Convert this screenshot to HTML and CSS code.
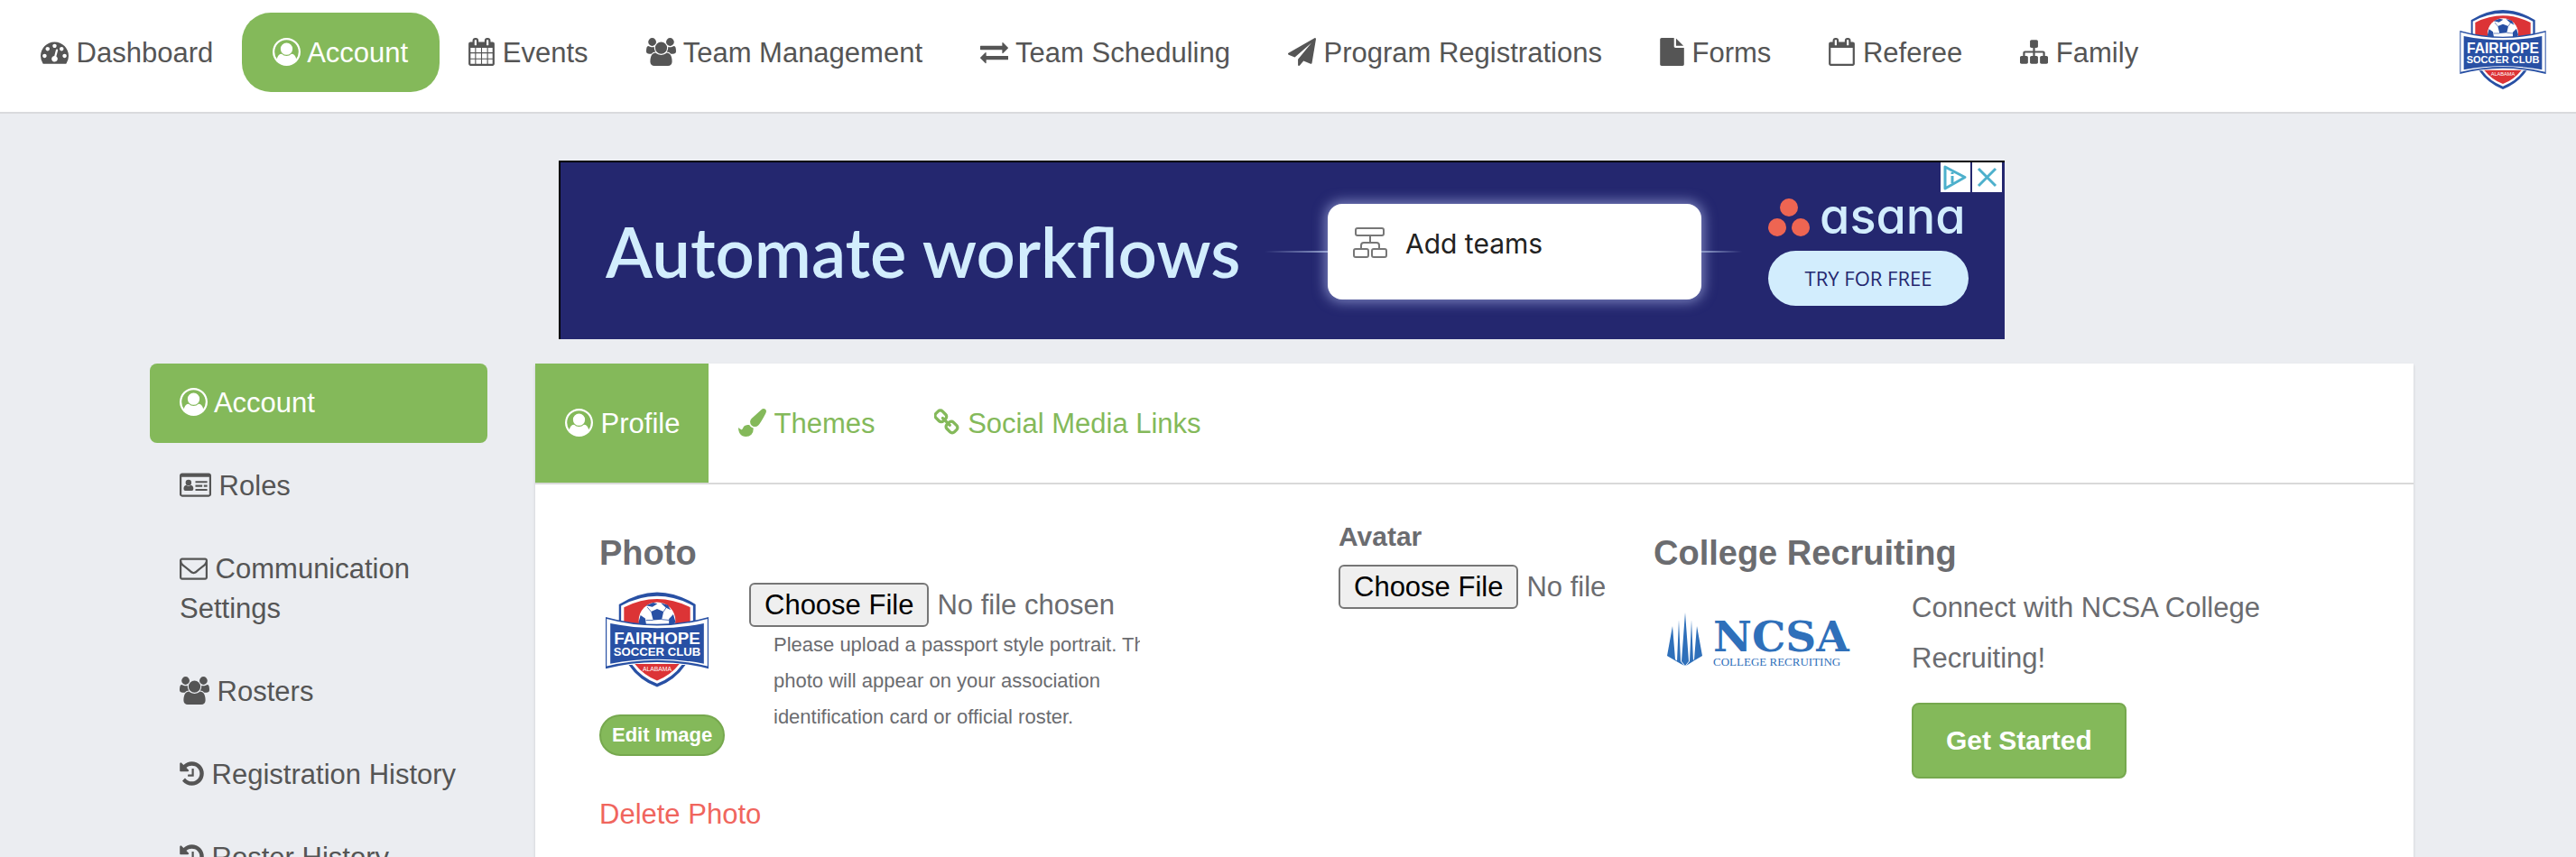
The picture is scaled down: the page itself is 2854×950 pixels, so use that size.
FILE: index.html
```
<!DOCTYPE html>
<html lang="en">
<head>
    <meta charset="UTF-8">
    <meta name="viewport" content="width=device-width, initial-scale=1.0">
    <title>Account</title>
    <link rel="stylesheet" href="styles.css">
</head>
<body>
    <!-- shared icons -->
    <svg class="sprite" aria-hidden="true">
        <symbol id="user" viewBox="0 0 1792 1792"><path d="M896 0q182 0 348 71t286 191 191 286 71 348q0 181-70.5 347t-190.5 286-286 191.5-349 71.5-349-71-285.5-191.5-190.5-286-71-347.5 71-348 191-286 286-191 348-71zm619 1351q149-205 149-455 0-156-61-298t-164-245-245-164-298-61-298 61-245 164-164 245-61 298q0 250 149 455 66-327 306-327 131 128 313 128t313-128q240 0 306 327zm-235-647q0-159-112.5-271.5t-271.5-112.5-271.5 112.5-112.5 271.5 112.5 271.5 271.5 112.5 271.5-112.5 112.5-271.5z"/></symbol>
        <symbol id="group" viewBox="-64 0 1920 1792"><path d="M529 896q-162 5-265 128h-134q-82 0-138-40.5t-56-118.5q0-353 124-353 6 0 43.5 21t97.5 42.5 119 21.5q67 0 133-23-5 37-5 66 0 139 81 256zm1071 637q0 120-73 189.5t-194 69.5h-874q-121 0-194-69.5t-73-189.5q0-53 3.5-103.5t14-109 26.5-108.5 43-97.5 62-81 85.5-53.5 111.5-20q10 0 43 21.5t73 48 107 48 135 21.5 135-21.5 107-48 73-48 43-21.5q61 0 111.5 20t85.5 53.5 62 81 43 97.5 26.5 108.5 14 109 3.5 103.5zm-1024-1277q0 106-75 181t-181 75-181-75-75-181 75-181 181-75 181 75 75 181zm704 384q0 159-112.5 271.5t-271.5 112.5-271.5-112.5-112.5-271.5 112.5-271.5 271.5-112.5 271.5 112.5 112.5 271.5zm576 225q0 78-56 118.5t-138 40.5h-134q-103-123-265-128 81-117 81-256 0-29-5-66 66 23 133 23 59 0 119-21.5t97.5-42.5 43.5-21q124 0 124 353zm-128-609q0 106-75 181t-181 75-181-75-75-181 75-181 181-75 181 75 75 181z"/></symbol>
        <symbol id="history" viewBox="128 0 1536 1792"><path d="M1664 896q0 156-61 298t-164 245-245 164-298 61q-172 0-327-72.5t-264-204.5q-7-10-6.5-22.5t8.5-20.5l137-138q10-9 25-9 16 2 23 12 73 95 179 147t225 52q104 0 198.5-40.5t163.5-109.5 109.5-163.5 40.5-198.5-40.5-198.5-109.5-163.5-163.5-109.5-198.5-40.5q-98 0-188 35.5t-160 101.5l137 138q31 30 14 69-17 40-59 40h-448q-26 0-45-19t-19-45v-448q0-42 40-59 39-17 69 14l130 129q107-101 244.5-156.5t284.5-55.5q156 0 298 61t245 164 164 245 61 298zm-640-288v448q0 14-9 23t-23 9h-320q-14 0-23-9t-9-23v-64q0-14 9-23t23-9h224v-352q0-14 9-23t23-9h64q14 0 23 9t9 23z"/></symbol>
        <symbol id="club" viewBox="0 0 286 264">
            <path fill="#2850a4" d="M37 34Q88 1 143 0q55 1 107 34v60H37zM64 202h158q-28 42-79 62-51-20-79-62z"/>
            <path fill="#fff" d="M43 38q49-27 100-27t100 27v56H43zM74 202h138q-26 36-69 52-43-16-69-52z"/>
            <path fill="#dc3436" d="M51 42q46-23 92-23t92 23v54H51zM81 200h124q-25 32-62 46-37-14-62-46z"/>
            <circle cx="143" cy="79" r="51" fill="#fff"/>
            <g fill="#2850a4">
                <path d="M126 54l17-7 18 7-5 22-24 2z"/>
                <path d="M112 37l20-8 12 3-14 9zM153 30l20 6 8 14-14-7zM176 74l12-12 6 20-5 12h-13zM92 82l5-18 13 9 3 18H93z"/>
            </g>
            <path fill="none" stroke="#2850a4" stroke-width="2" d="M126 54l-10-12M161 54l8-12M156 76l20 2M132 78l-20 0"/>
            <path fill="#2850a4" d="M0 69q143 40 286 0v144q-143-37-286 0z"/>
            <path fill="#fff" d="M3 74q140 38 280 0v132q-140-34-280 0z"/>
            <path fill="#2850a4" d="M13 87q130 26 260 0v112q-130-25-260 0z"/>
            <g fill="#fff" font-family="Liberation Sans, Arial, sans-serif" text-anchor="middle">
                <text x="143" y="145" font-size="47" font-weight="bold">FAIRHOPE</text>
                <text x="143" y="177" font-size="33" font-weight="bold">SOCCER CLUB</text>
                <text x="143" y="219" font-size="17">ALABAMA</text>
            </g>
        </symbol>
    </svg>

    <header class="navbar">
        <nav class="nav">
            <a href="#"><svg class="icon" viewBox="0 0 1792 1792"><path d="M384 1152q0-53-37.5-90.5t-90.5-37.5-90.5 37.5-37.5 90.5 37.5 90.5 90.5 37.5 90.5-37.5 37.5-90.5zm192-448q0-53-37.5-90.5t-90.5-37.5-90.5 37.5-37.5 90.5 37.5 90.5 90.5 37.5 90.5-37.5 37.5-90.5zm428 481l101-382q6-26-7.5-48.5t-38.5-29.5-48 6.5-30 39.5l-101 382q-60 5-107 43.5t-63 98.5q-20 77 20 146t117 89 146-20 89-117q16-60-6-117t-72-91zm660-33q0-53-37.5-90.5t-90.5-37.5-90.5 37.5-37.5 90.5 37.5 90.5 90.5 37.5 90.5-37.5 37.5-90.5zm-640-640q0-53-37.5-90.5t-90.5-37.5-90.5 37.5-37.5 90.5 37.5 90.5 90.5 37.5 90.5-37.5 37.5-90.5zm448 192q0-53-37.5-90.5t-90.5-37.5-90.5 37.5-37.5 90.5 37.5 90.5 90.5 37.5 90.5-37.5 37.5-90.5zm320 448q0 261-141 483-19 29-54 29h-1402q-35 0-54-29-141-221-141-483 0-182 71-348t191-286 286-191 348-71 348 71 286 191 191 286 71 348z"/></svg> Dashboard</a>
            <a href="#" class="active"><svg class="icon"><use href="#user"/></svg> Account</a>
            <a href="#"><svg class="icon icon-cal" viewBox="64 0 1664 1792"><path d="M192 1664h288v-288h-288v288zm352 0h320v-288h-320v288zm-352-352h288v-320h-288v320zm352 0h320v-320h-320v320zm-352-384h288v-288h-288v288zm736 736h320v-288h-320v288zm-384-736h320v-288h-320v288zm768 736h288v-288h-288v288zm-384-352h320v-320h-320v320zm-352-864v-288q0-13-9.5-22.5t-22.5-9.5h-64q-13 0-22.5 9.5t-9.5 22.5v288q0 13 9.5 22.5t22.5 9.5h64q13 0 22.5-9.5t9.5-22.5zm736 864h288v-320h-288v320zm-384-384h320v-288h-320v288zm384 0h288v-288h-288v288zm32-480v-288q0-13-9.5-22.5t-22.5-9.5h-64q-13 0-22.5 9.5t-9.5 22.5v288q0 13 9.5 22.5t22.5 9.5h64q13 0 22.5-9.5t9.5-22.5zm384-64v1280q0 52-38 90t-90 38h-1408q-52 0-90-38t-38-90v-1280q0-52 38-90t90-38h128v-96q0-66 47-113t113-47h64q66 0 113 47t47 113v96h384v-96q0-66 47-113t113-47h64q66 0 113 47t47 113v96h128q52 0 90 38t38 90z"/></svg> Events</a>
            <a href="#"><svg class="icon icon-group"><use href="#group"/></svg> Team Management</a>
            <a href="#"><svg class="icon" viewBox="0 0 1792 1792"><path d="M1792 1184v192q0 13-9.5 22.5t-22.5 9.5h-1376v192q0 13-9.5 22.5t-22.5 9.5q-12 0-24-10l-319-320q-9-9-9-22 0-14 9-23l320-320q9-9 23-9 13 0 22.5 9.5t9.5 22.5v192h1376q13 0 22.5 9.5t9.5 22.5zm0-544q0 14-9 23l-320 320q-9 9-23 9-13 0-22.5-9.5t-9.5-22.5v-192h-1376q-13 0-22.5-9.5t-9.5-22.5v-192q0-13 9.5-22.5t22.5-9.5h1376v-192q0-14 9-23t23-9q12 0 24 10l319 319q9 9 9 23z"/></svg> Team Scheduling</a>
            <a href="#"><svg class="icon" viewBox="0 0 1792 1792"><path d="M1764 11q33 24 27 64l-256 1536q-5 29-32 45-14 8-31 8-11 0-24-5l-453-185-242 295q-18 23-49 23-13 0-22-4-19-7-30.5-23.5t-11.5-36.5v-349l864-1059-1069 925-395-162q-37-14-40-55-2-40 32-59l1664-960q15-9 32-9 20 0 36 11z"/></svg> Program Registrations</a>
            <a href="#"><svg class="icon icon-narrow" viewBox="128 0 1536 1792"><path d="M1152 512v-472q22 14 36 28l408 408q14 14 28 36h-472zm-128 32q0 40 28 68t68 28h544v1056q0 40-28 68t-68 28h-1344q-40 0-68-28t-28-68v-1600q0-40 28-68t68-28h800v544z"/></svg> Forms</a>
            <a href="#"><svg class="icon icon-cal" viewBox="64 0 1664 1792"><path d="M192 1664h1408v-1024h-1408v1024zm384-1216v-288q0-14-9-23t-23-9h-64q-14 0-23 9t-9 23v288q0 14 9 23t23 9h64q14 0 23-9t9-23zm768 0v-288q0-14-9-23t-23-9h-64q-14 0-23 9t-9 23v288q0 14 9 23t23 9h64q14 0 23-9t9-23zm384-64v1280q0 52-38 90t-90 38h-1408q-52 0-90-38t-38-90v-1280q0-52 38-90t90-38h128v-96q0-66 47-113t113-47h64q66 0 113 47t47 113v96h384v-96q0-66 47-113t113-47h64q66 0 113 47t47 113v96h128q52 0 90 38t38 90z"/></svg> Referee</a>
            <a href="#"><svg class="icon" viewBox="0 0 1792 1792"><path d="M1792 1248v320q0 40-28 68t-68 28h-320q-40 0-68-28t-28-68v-320q0-40 28-68t68-28h96v-192h-512v192h96q40 0 68 28t28 68v320q0 40-28 68t-68 28h-320q-40 0-68-28t-28-68v-320q0-40 28-68t68-28h96v-192h-512v192h96q40 0 68 28t28 68v320q0 40-28 68t-68 28h-320q-40 0-68-28t-28-68v-320q0-40 28-68t68-28h96v-192q0-52 38-90t90-38h512v-192h-96q-40 0-68-28t-28-68v-320q0-40 28-68t68-28h320q40 0 68 28t28 68v320q0 40-28 68t-68 28h-96v192h512q52 0 90 38t38 90v192h96q40 0 68 28t28 68z"/></svg> Family</a>
        </nav>
        <svg class="nav-logo"><use href="#club"/></svg>
    </header>

    <div class="page">
        <section class="ad" aria-label="Advertisement">
            <div class="ad-title">Automate workflows</div>
            <div class="ad-flow">
                <div class="ad-line"></div>
                <div class="ad-card">
                    <svg viewBox="0 0 38 34" class="ad-card-icon"><g fill="none" stroke="#777" stroke-width="2"><rect x="3" y="1" width="31" height="8" rx="2"/><rect x="1" y="24" width="16" height="9" rx="2"/><rect x="21" y="24" width="16" height="9" rx="2"/><path d="M19 9v8M9 24v-4q0-3 3-3h14q3 0 3 3v4"/></g></svg>
                    <span>Add teams</span>
                </div>
                <div class="ad-line ad-line-end"></div>
            </div>
            <div class="ad-brand">
                <div class="asana">
                    <svg viewBox="0 0 47 43" class="asana-dots"><g fill="#ee6552"><circle cx="23" cy="10" r="10"/><circle cx="10" cy="32" r="10"/><circle cx="36" cy="32" r="10"/></g></svg>
                    <span>asana</span>
                </div>
                <a href="#" class="ad-btn">TRY FOR FREE</a>
            </div>
            <div class="ad-choices">
                <button type="button" aria-label="Ad info"><svg viewBox="0 0 33 33"><path d="M5 5v24l22-12.5zM5 5v24" fill="none" stroke="#4db0cc" stroke-width="3" stroke-linejoin="round"/><path d="M13 15v8M13 11v2" stroke="#4db0cc" stroke-width="3"/></svg></button>
                <button type="button" aria-label="Close ad"><svg viewBox="0 0 33 33"><path d="M7 7l19 19M26 7L7 26" stroke="#4db0cc" stroke-width="3"/></svg></button>
            </div>
        </section>

        <div class="columns">
            <nav class="sidebar">
                <a href="#" class="active"><svg class="icon"><use href="#user"/></svg> Account</a>
                <a href="#"><svg class="icon icon-card" viewBox="0 0 2048 1792"><path d="M160 128h1728q66 0 113 47t47 113v1216q0 66-47 113t-113 47H160q-66 0-113-47T0 1504V288q0-66 47-113t113-47zM128 384v1120q0 32 32 32h1728q32 0 32-32V384z" fill-rule="evenodd"/><circle cx="576" cy="750" r="190"/><path d="M430 910q146 110 292 0 174 30 174 250 0 120-110 120H370q-110 0-110-120 0-220 170-250zM1024 640h768v128h-768zM1024 896h448v128h-448zM1568 896h224v128h-224zM1024 1152h768v128h-768z"/></svg> Roles</a>
                <a href="#"><svg class="icon" viewBox="0 0 1792 1792"><path d="M1664 1504v-768q-32 36-69 66-268 206-426 338-51 43-83 67t-86.5 48.5-102.5 24.5h-2q-48 0-102.5-24.5t-86.5-48.5-83-67q-158-132-426-338-37-30-69-66v768q0 13 9.5 22.5t22.5 9.5h1472q13 0 22.5-9.5t9.5-22.5zm0-1051v-24.5l-.5-13-3-12.5-5.5-9-9-7.5-14-2.5h-1472q-13 0-22.5 9.5t-9.5 22.5q0 168 147 284 193 152 401 317 6 5 35 29.5t46 37.5 44.5 31.5 50.5 27.5 43 9h2q20 0 43-9t50.5-27.5 44.5-31.5 46-37.5 35-29.5q208-165 401-317 54-43 100.5-115.5t46.5-131.5zm128-37v1088q0 66-47 113t-113 47h-1472q-66 0-113-47t-47-113v-1088q0-66 47-113t113-47h1472q66 0 113 47t47 113z"/></svg> Communication Settings</a>
                <a href="#"><svg class="icon icon-group"><use href="#group"/></svg> Rosters</a>
                <a href="#"><svg class="icon icon-narrow"><use href="#history"/></svg> Registration History</a>
                <a href="#"><svg class="icon icon-narrow"><use href="#history"/></svg> Roster History</a>
            </nav>

            <main class="panel">
                <nav class="tabs">
                    <a href="#" class="active"><svg class="icon"><use href="#user"/></svg> Profile</a>
                    <a href="#"><svg class="icon" viewBox="0 0 1792 1792"><path d="M1615 0q70 0 122.5 46.5t52.5 116.5q0 63-45 151-332 629-465 752-97 91-218 91-126 0-216.5-92.5t-90.5-219.5q0-128 92-212l638-579q59-54 130-54zm-909 1034q39 76 106.5 130t150.5 76l1 71q4 213-129.5 347t-348.5 134q-123 0-218-46.5t-152.5-127.5-86.5-183-29-220q7 5 41 30t62 44.5 59 36.5 46 17q41 0 55-37 25-66 57.5-112.5t69.5-76 88-47.5 103-25.5 125-10.5z"/></svg> Themes</a>
                    <a href="#"><svg class="icon icon-cal" viewBox="64 0 1664 1792"><path d="M1456 1216q0-40-28-68l-208-208q-28-28-68-28-42 0-72 32 3 3 19 18.5t21.5 21.5 15 19 13 25.5 3.5 27.5q0 40-28 68t-68 28q-15 0-27.5-3.5t-25.5-13-19-15-21.5-21.5-18.5-19q-33 31-33 73 0 40 28 68l206 207q27 27 68 27 40 0 68-26l147-146q28-28 28-67zm-703-705q0-40-28-68l-206-207q-28-28-68-28-39 0-68 27l-147 146q-28 28-28 67 0 40 28 68l208 208q27 27 68 27 42 0 72-31-3-3-19-18.5t-21.5-21.5-15-19-13-25.5-3.5-27.5q0-40 28-68t68-28q15 0 27.5 3.5t25.5 13 19 15 21.5 21.5 18.5 19q33-31 33-73zm895 705q0 120-85 203l-147 146q-83 83-203 83-121 0-204-85l-206-207q-83-83-83-203 0-123 88-209l-88-88q-86 88-208 88-120 0-204-84l-208-208q-84-84-84-204t85-203l147-146q83-83 203-83 121 0 204 85l206 207q83 83 83 203 0 123-88 209l88 88q86-88 208-88 120 0 204 84l208 208q84 84 84 204z"/></svg> Social Media Links</a>
                </nav>

                <div class="profile">
                    <section>
                        <h2><label for="photo">Photo</label></h2>
                        <div class="photo-row">
                            <div class="photo-left">
                                <svg class="photo"><use href="#club"/></svg>
                                <button type="button" class="edit-btn">Edit Image</button>
                            </div>
                            <div class="photo-right">
                                <input type="file" id="photo">
                                <p class="hint">Please upload a passport style portrait. This<br>photo will appear on your association<br>identification card or official roster.</p>
                            </div>
                        </div>
                        <a href="#" class="delete">Delete Photo</a>
                    </section>

                    <section class="avatar">
                        <label for="avatar">Avatar</label>
                        <div class="avatar-file"><input type="file" id="avatar"></div>
                    </section>

                    <section>
                        <h2>College Recruiting</h2>
                        <div class="college">
                            <svg class="ncsa" viewBox="0 0 204 62">
                                <g fill="#2f70ba">
                                    <path d="M20 0l4 54-4 5-4-5zM13 8l2 46 4 5-8-5zM27 8l-2 46-4 5 8-5zM6 15l3 37 8 6L0 48zM33 15l-3 37-8 6 17-10z"/>
                                    <text x="51" y="43" font-family="DejaVu Serif, serif" font-weight="bold" font-size="47">NCSA</text>
                                    <text x="51" y="59" font-family="Liberation Serif, serif" font-size="13">COLLEGE RECRUITING</text>
                                </g>
                            </svg>
                            <div>
                                <p class="connect">Connect with NCSA College<br>Recruiting!</p>
                                <button type="button" class="start-btn">Get Started</button>
                            </div>
                        </div>
                    </section>
                </div>
            </main>
        </div>
    </div>
</body>
</html>
```
FILE: styles.css
```
* {
    box-sizing: border-box;
}
html, body {
    height: 100%;
}
body {
    margin: 0;
    display: flex;
    flex-direction: column;
    overflow: hidden;
    font-family: "Liberation Sans", Arial, sans-serif;
    font-size: 31px;
    line-height: 41px;
    color: #6b6c70;
    background-color: #ebedf1;
}
a {
    color: #555;
    text-decoration: none;
}
h2, p {
    margin: 0;
}
button, input {
    font-family: inherit;
    color: inherit;
}
.sprite {
    display: none;
}
.icon {
    width: 31px;
    height: 31px;
    fill: currentColor;
    vertical-align: -4px;
}
.icon-group {
    width: 33px;
}
.icon-cal {
    width: 29px;
}
.icon-narrow {
    width: 27px;
}
.icon-card {
    width: 35px;
}

/* top bar */
.navbar {
    flex: none;
    display: flex;
    justify-content: space-between;
    align-items: flex-start;
    padding: 14px 33px 22px 13px;
    background-color: #fff;
    border-bottom: 2px solid #d9dadd;
}
.nav {
    display: flex;
}
.nav a {
    padding: 25px 32px 23px;
    line-height: 40px;
    white-space: nowrap;
}
.nav a.active {
    padding: 25px 35px 23px 34px;
    color: #fff;
    background-color: #84b95a;
    border-radius: 32px;
}
.nav-logo {
    width: 96px;
    height: 88px;
    margin-top: -3px;
}

/* content */
.page {
    flex: 1;
    min-height: 0;
    display: flex;
    flex-direction: column;
    padding: 52px 180px 0 166px;
}
.ad {
    position: relative;
    flex: none;
    display: flex;
    align-items: center;
    width: 1602px;
    max-width: 100%;
    height: 198px;
    margin: 0 auto 27px;
    padding: 2px 40px 0 50px;
    background-color: #24276f;
    border-top: 2px solid #000;
    border-left: 2px solid #000;
}
.ad-title {
    flex: 1;
    font-family: Lato, sans-serif;
    font-size: 76px;
    line-height: 100px;
    font-weight: 600;
    color: #d2edfd;
    white-space: nowrap;
}
.ad-flow {
    display: flex;
    align-items: center;
    margin-right: 29px;
}
.ad-line {
    width: 70px;
    height: 2px;
    background: linear-gradient(to right, transparent, #8f9cc8);
}
.ad-line-end {
    width: 45px;
    background: linear-gradient(to left, transparent, #8f9cc8);
}
.ad-card {
    display: flex;
    align-items: flex-start;
    gap: 20px;
    width: 414px;
    height: 106px;
    padding: 26px 28px;
    font-family: Inter, sans-serif;
    font-size: 30px;
    line-height: 36px;
    color: #222;
    background-color: #fff;
    border-radius: 16px;
    box-shadow: 0 0 14px 3px rgba(180, 190, 240, 0.6);
}
.ad-card-icon {
    width: 38px;
    height: 34px;
}
.ad-brand {
    width: 222px;
}
.asana {
    display: flex;
    align-items: center;
    gap: 10px;
    height: 44px;
    margin-bottom: 14px;
    font-family: Inter, sans-serif;
    font-feature-settings: "cv11";
    font-size: 54px;
    line-height: 40px;
    font-weight: 500;
    color: #d2edfd;
}
.asana-dots {
    width: 47px;
    height: 43px;
}
.asana span {
    padding-bottom: 4px;
}
.ad-btn {
    display: block;
    line-height: 61px;
    font-family: "Open Sans", sans-serif;
    font-size: 22px;
    text-align: center;
    color: #24276f;
    background-color: #d2edfd;
    border-radius: 31px;
}
.ad-choices {
    position: absolute;
    top: 0;
    right: 3px;
    display: flex;
    gap: 2px;
}
.ad-choices button {
    width: 33px;
    height: 33px;
    padding: 0;
    border: none;
    background-color: #fff;
}
.ad-choices svg {
    display: block;
}
.columns {
    flex: 1;
    min-height: 0;
    display: flex;
    gap: 53px;
}

/* sidebar */
.sidebar {
    flex: none;
    width: 374px;
}
.sidebar a {
    display: block;
    margin-bottom: 4px;
    padding: 22px 33px;
    line-height: 44px;
}
.sidebar a.active {
    color: #fff;
    background-color: #84b95a;
    border-radius: 8px;
}

/* main panel */
.panel {
    flex: 1;
    min-width: 0;
    background-color: #fff;
    box-shadow: 0 2px 3px rgba(0, 0, 0, 0.15);
}
.tabs {
    display: flex;
    border-bottom: 2px solid #d9d9d9;
}
.tabs a {
    padding: 46px 32px 45px 33px;
    color: #84b95a;
}
.tabs a.active {
    color: #fff;
    background-color: #84b95a;
}
.profile {
    display: grid;
    grid-template-columns: 819fr 349fr 770fr;
    padding: 52px 72px 0 71px;
}
h2 {
    margin-bottom: 9px;
    font-size: 38px;
    line-height: 48px;
}
input[type="file"] {
    display: block;
    width: 420px;
    font-size: 31px;
    line-height: 41px;
}
input[type="file"]::file-selector-button {
    height: 49px;
    margin-right: 9px;
    padding: 0 15px;
    font-family: inherit;
    font-size: 31px;
    color: #000;
    background-color: #efefef;
    border: 2px solid #767676;
    border-radius: 6px;
}
.photo-row {
    display: flex;
}
.photo-left {
    flex: none;
    width: 166px;
}
.photo {
    display: block;
    width: 114px;
    height: 106px;
    margin: 10px 7px 29px;
}
.photo-right {
    width: 433px;
    overflow: hidden;
}
.hint {
    padding-left: 27px;
    font-size: 22px;
    line-height: 40px;
    white-space: nowrap;
}
.edit-btn, .start-btn {
    font-weight: bold;
    color: #fff;
    background-color: #84b95a;
    border: 2px solid #76a84e;
}
.edit-btn {
    height: 46px;
    padding: 0 12px;
    font-size: 22px;
    border-radius: 23px;
}
.delete {
    display: block;
    margin-top: 44px;
    color: #f0655d;
}
.avatar {
    margin-top: -15px;
}
.avatar label {
    display: block;
    margin-bottom: 11px;
    font-size: 30px;
    font-weight: bold;
}
.avatar-file {
    width: 300px;
    overflow: hidden;
}
.college {
    display: flex;
}
.ncsa {
    width: 204px;
    height: 62px;
    margin: 33px 67px 0 15px;
}
.connect {
    line-height: 56px;
}
.start-btn {
    height: 84px;
    margin-top: 21px;
    padding: 0 36px;
    font-size: 30px;
    border-radius: 8px;
}
```
